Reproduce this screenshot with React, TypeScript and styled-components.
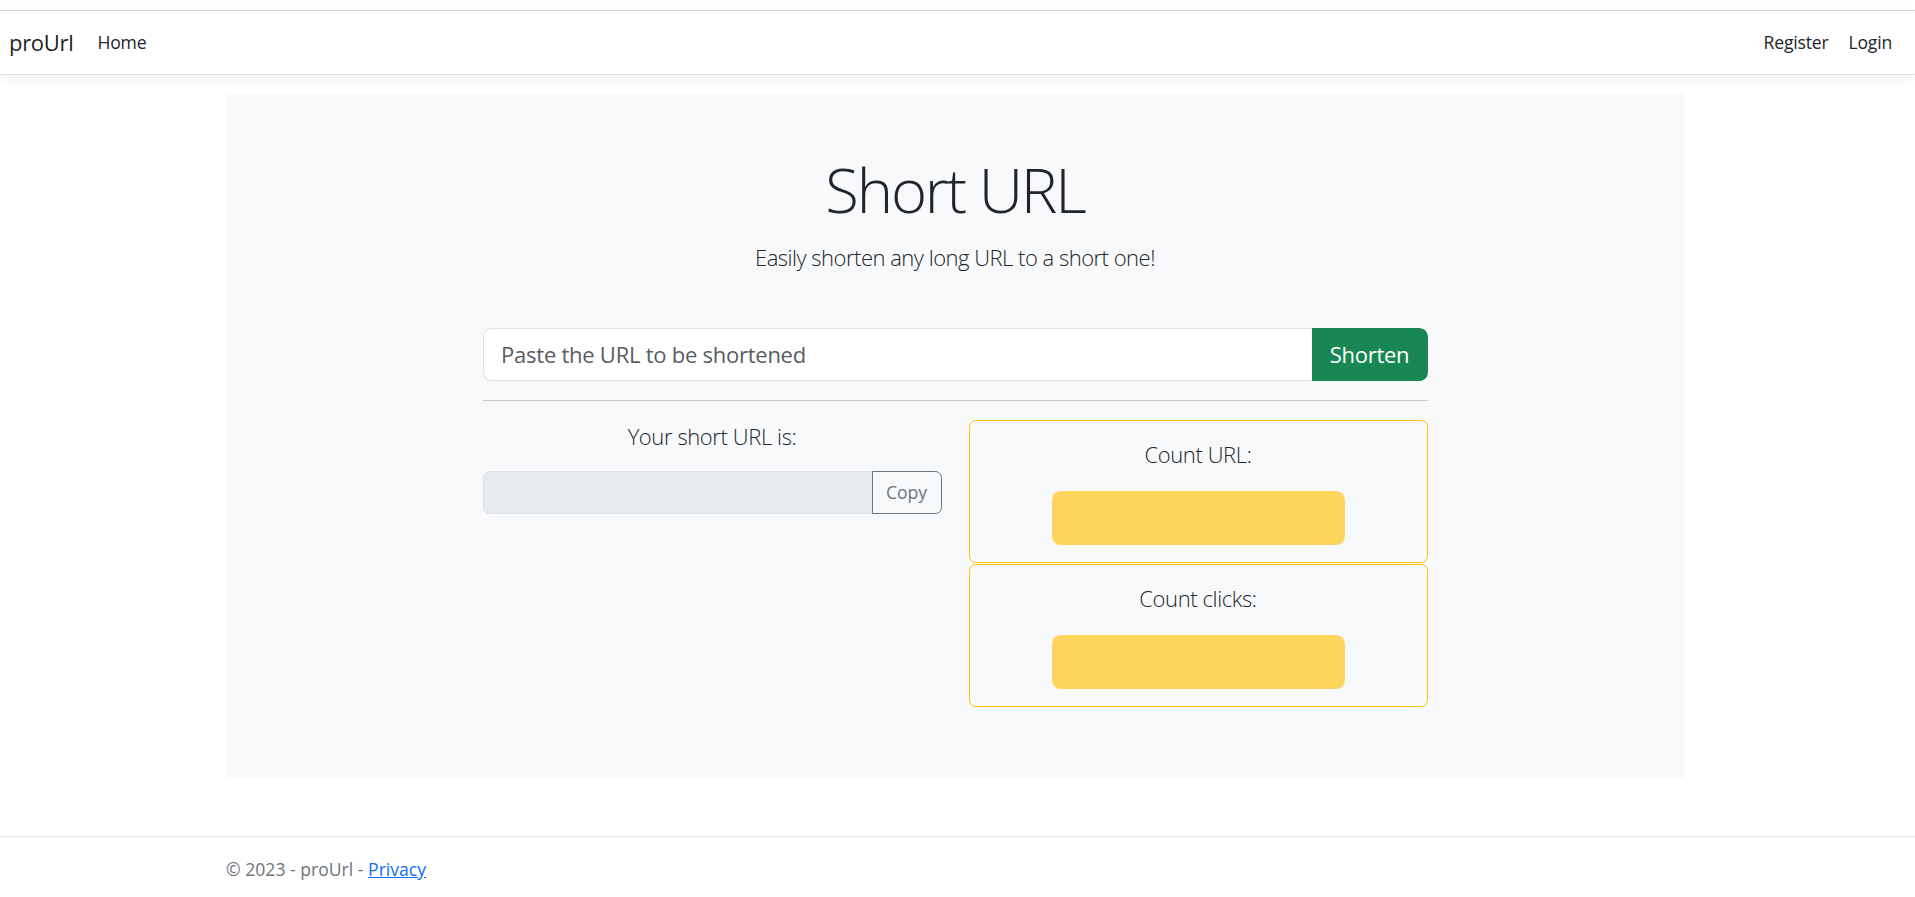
import React from "react";
import styled, { createGlobalStyle } from "styled-components";

const GlobalStyle = createGlobalStyle`
  html, body { margin: 0; padding: 0; background: #ffffff; }
  body {
    font-family: "Open Sans", "Noto Sans", sans-serif;
    color: #212529;
    font-size: 17.6px;
    line-height: 1.5;
  }
  * { box-sizing: border-box; }
`;

const Header = styled.header`
  margin-top: 10px;
  height: 65px;
  border-top: 1px solid #d6d6d6;
  border-bottom: 1px solid #dee2e6;
  box-shadow: 0 4px 13px rgba(0, 0, 0, 0.05);
  display: flex;
  align-items: center;
  padding: 0 15px 0 9px;
`;

const Brand = styled.a`
  font-size: 22px;
  color: rgba(0, 0, 0, 0.9);
  text-decoration: none;
  margin-right: 16px;
  letter-spacing: -0.3px;
`;

const NavList = styled.nav<{ $grow?: boolean }>`
  display: flex;
  align-items: center;
  gap: 4px;
  flex: ${(p) => (p.$grow ? 1 : "none")};
`;

const NavLink = styled.a`
  font-size: 17.6px;
  color: #212529;
  text-decoration: none;
  padding: 0 8px;
  letter-spacing: -0.2px;
`;

const Main = styled.main`
  padding-top: 18px;
`;

const Jumbotron = styled.section`
  width: 1458px;
  height: 685px;
  margin-left: 226px;
  background: #f8f9fa;
  padding-top: 60px;
`;

const Title = styled.h1`
  margin: 0;
  text-align: center;
  font-size: 61.6px;
  font-weight: 300;
  line-height: 1.2;
  letter-spacing: -2.2px;
  color: #212529;
`;

const Lead = styled.p`
  margin: 14px 0 0;
  text-align: center;
  font-size: 22px;
  font-weight: 300;
  line-height: 1.5;
  letter-spacing: -0.5px;
  color: #212529;
`;

const Inner = styled.div`
  width: 945px;
  margin: 54px auto 0;
`;

const InputGroup = styled.div<{ $h: number }>`
  display: flex;
  height: ${(p) => p.$h}px;
`;

const UrlInput = styled.input`
  flex: 1;
  min-width: 0;
  height: 100%;
  border: 1px solid #dee2e6;
  border-right: none;
  border-radius: 8.8px 0 0 8.8px;
  background: #ffffff;
  padding: 0 17.6px;
  font-family: inherit;
  font-size: 22px;
  letter-spacing: -0.25px;
  color: #212529;
  outline: none;
  &::placeholder { color: #595c5f; opacity: 1; }
`;

const ShortenButton = styled.button`
  width: 116px;
  height: 100%;
  border: none;
  border-radius: 0 8.8px 8.8px 0;
  background: #198754;
  color: #ffffff;
  font-family: inherit;
  font-size: 22px;
  letter-spacing: -0.3px;
  padding: 0;
  cursor: pointer;
`;

const Divider = styled.hr`
  margin: 19px 0 19px;
  border: none;
  border-top: 1px solid #c7c8c9;
`;

const Row = styled.div`
  display: grid;
  grid-template-columns: 1fr 1fr;
  column-gap: 27px;
`;

const Column = styled.div`
  display: flex;
  flex-direction: column;
`;

const Label = styled.div`
  text-align: center;
  font-size: 22px;
  font-weight: 300;
  line-height: 1.5;
  letter-spacing: -0.4px;
  color: #212529;
`;

const LeftLabel = styled(Label)`
  margin-top: 0;
  margin-bottom: 18px;
`;

const ResultInput = styled.input`
  flex: 1;
  min-width: 0;
  height: 100%;
  border: 1px solid #dee2e6;
  border-right: none;
  border-radius: 6.6px 0 0 6.6px;
  background: #e9ecef;
  padding: 0 13px;
  font-family: inherit;
  font-size: 17.6px;
  outline: none;
`;

const CopyButton = styled.button`
  width: 70px;
  height: 100%;
  border: 1px solid #6c757d;
  border-radius: 0 6.6px 6.6px 0;
  background: transparent;
  color: #6c757d;
  font-family: inherit;
  font-size: 17.6px;
  padding: 0;
`;

const Card = styled.div`
  height: 143px;
  border: 1px solid #ffc107;
  border-radius: 6.6px;
  display: flex;
  flex-direction: column;
  align-items: center;
  padding-top: 17px;
  & + & { margin-top: 1px; }
`;

const CountBox = styled.div`
  width: 293px;
  height: 54px;
  margin-top: 20px;
  background: #fdd45c;
  border-radius: 8.8px;
`;

const Footer = styled.footer`
  margin-top: 58px;
  border-top: 1px solid #dee2e6;
  padding: 2px 0 0 226px;
  line-height: 60px;
  font-size: 17.6px;
  color: #6c757d;
`;

const FooterLink = styled.a`
  color: #0d6efd;
  text-decoration: underline;
`;

export default function App() {
  return (
    <>
      <GlobalStyle />
      <Header>
        <Brand href="#">proUrl</Brand>
        <NavList $grow>
          <NavLink href="#">Home</NavLink>
        </NavList>
        <NavList>
          <NavLink href="#">Register</NavLink>
          <NavLink href="#">Login</NavLink>
        </NavList>
      </Header>
      <Main>
        <Jumbotron>
          <Title>Short URL</Title>
          <Lead>Easily shorten any long URL to a short one!</Lead>
          <Inner>
            <InputGroup $h={53}>
              <UrlInput placeholder="Paste the URL to be shortened" />
              <ShortenButton>Shorten</ShortenButton>
            </InputGroup>
            <Divider />
            <Row>
              <Column>
                <LeftLabel>Your short URL is:</LeftLabel>
                <InputGroup $h={43}>
                  <ResultInput readOnly />
                  <CopyButton>Copy</CopyButton>
                </InputGroup>
              </Column>
              <Column>
                <Card>
                  <Label>Count URL:</Label>
                  <CountBox />
                </Card>
                <Card>
                  <Label>Count clicks:</Label>
                  <CountBox />
                </Card>
              </Column>
            </Row>
          </Inner>
        </Jumbotron>
      </Main>
      <Footer>
        © 2023 - proUrl - <FooterLink href="#">Privacy</FooterLink>
      </Footer>
    </>
  );
}
